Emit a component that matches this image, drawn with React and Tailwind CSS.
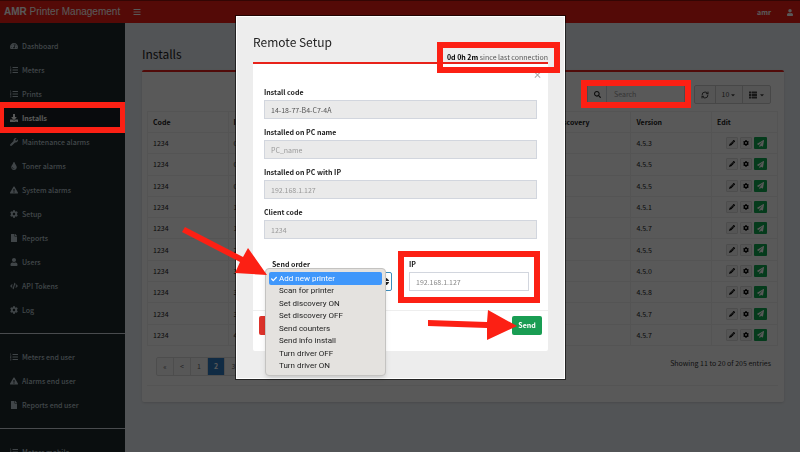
import { useState } from "react";
import {
  FaTachometerAlt,
  FaListOl,
  FaDownload,
  FaWrench,
  FaTint,
  FaExclamationTriangle,
  FaCog,
  FaFile,
  FaUser,
  FaCode,
  FaBars,
  FaSearch,
  FaThList,
  FaPencilAlt,
  FaPaperPlane,
  FaCaretDown,
  FaCheck,
  FaSort,
} from "react-icons/fa";
import { RefreshCw } from "lucide-react";

const menuGroups = [
  [
    { label: "Dashboard", icon: FaTachometerAlt },
    { label: "Meters", icon: FaListOl },
    { label: "Prints", icon: FaListOl },
    { label: "Installs", icon: FaDownload },
    { label: "Maintenance alarms", icon: FaWrench },
    { label: "Toner alarms", icon: FaTint },
    { label: "System alarms", icon: FaExclamationTriangle },
    { label: "Setup", icon: FaCog },
    { label: "Reports", icon: FaFile },
    { label: "Users", icon: FaUser },
    { label: "API Tokens", icon: FaCode },
    { label: "Log", icon: FaCog },
  ],
  [
    { label: "Meters end user", icon: FaListOl },
    { label: "Alarms end user", icon: FaExclamationTriangle },
    { label: "Reports end user", icon: FaFile },
  ],
  [{ label: "Meters mobile", icon: FaListOl }],
];

const installs = [
  { id: 1, code: "1234", install: "0", version: "4.5.3" },
  { id: 2, code: "1234", install: "0", version: "4.5.5" },
  { id: 3, code: "1234", install: "0", version: "4.5.5" },
  { id: 4, code: "1234", install: "1", version: "4.5.1" },
  { id: 5, code: "1234", install: "1", version: "4.5.7" },
  { id: 6, code: "1234", install: "2", version: "4.5.5" },
  { id: 7, code: "1234", install: "3", version: "4.5.0" },
  { id: 8, code: "1234", install: "3", version: "4.5.8" },
  { id: 9, code: "1234", install: "3", version: "4.5.7" },
  { id: 10, code: "1234", install: "4", version: "4.5.7" },
];

const orders = [
  "Add new printer",
  "Scan for printer",
  "Set discovery ON",
  "Set discovery OFF",
  "Send counters",
  "Send info install",
  "Turn driver OFF",
  "Turn driver ON",
];

function Highlight({ className }) {
  return <span className={`absolute z-30 border-[#fc2014] pointer-events-none ${className}`} />;
}

function Header() {
  return (
    <header className="flex items-center h-[23px] bg-[#f01d14] border-t border-[#8f120c] text-white shrink-0">
      <a href="#home" className="w-[125px] pl-1 text-[10px] leading-5 font-['Liberation_Sans',sans-serif] whitespace-nowrap">
        <b>AMR</b> Printer Management
      </a>
      <button aria-label="Toggle menu" className="ml-2">
        <FaBars className="w-2 h-2" />
      </button>
      <div className="ml-auto flex items-center gap-4 pr-[7px]">
        <a href="#account" className="text-[7px] font-bold leading-4">amr</a>
        <FaUser className="w-[6px] h-[7px]" />
      </div>
    </header>
  );
}

function Sidebar() {
  return (
    <nav className="w-[125px] shrink-0 bg-[#1e282c] text-[#b8c7ce] pt-[11px] overflow-hidden">
      {menuGroups.map((group, i) => (
        <ul key={i} className={i > 0 ? "mt-[11px] border-t border-[#d2d6de] pt-[11px]" : ""}>
          {group.map(({ label, icon: Icon }) => {
            const active = label === "Installs";
            return (
              <li key={label} className="relative">
                <a
                  href="#menu"
                  className={`flex items-center h-6 pl-[10px] gap-1 text-[7px] whitespace-nowrap ${active ? "bg-[#1a2226] text-white font-bold" : "font-medium"}`}
                >
                  <Icon className="w-2 h-2" />
                  {label}
                </a>
                {active && <Highlight className="inset-x-0 -top-1 -bottom-[3px] border-r-[5px] border-l-4 border-y-[6px]" />}
              </li>
            );
          })}
        </ul>
      ))}
    </nav>
  );
}

function Toolbar() {
  return (
    <div className="flex justify-end pr-[7px] pt-[13px] gap-[9px] h-[39px]">
      <div className="relative flex w-[98px] h-[19px]">
        <span className="flex items-center justify-center w-5 border border-[#d2d6de]">
          <FaSearch className="w-[7px] h-[7px]" />
        </span>
        <input
          aria-label="Search"
          placeholder="Search"
          className="flex-1 min-w-0 border border-l-0 border-[#d2d6de] px-[7px] text-[7px] placeholder:text-[#999]"
        />
        <Highlight className="-inset-x-[6px] -top-[5px] -bottom-1 border-[6px]" />
      </div>
      <div className="flex h-[19px] border border-[#ccc] rounded-[2px] bg-[#f4f4f4] text-[#444] divide-x divide-[#ccc] text-[7px]">
        <button aria-label="Refresh" className="w-[21px] flex items-center justify-center">
          <RefreshCw className="w-2 h-2" strokeWidth={3} />
        </button>
        <button className="w-[27px] flex items-center justify-center gap-px">
          10
          <FaCaretDown className="w-[6px] h-[6px]" />
        </button>
        <button aria-label="Columns" className="w-[27px] flex items-center justify-center gap-[2px]">
          <FaThList className="w-2 h-2" />
          <FaCaretDown className="w-[6px] h-[6px]" />
        </button>
      </div>
    </div>
  );
}

function InstallsTable() {
  const cell = "border border-[#f0f0f0] px-[5px] py-0 truncate";
  return (
    <table className="w-full h-[235px] table-fixed border-collapse text-left text-[7px] leading-3">
      <thead>
        <tr className="h-[21px]">
          <th className={cell}>Code</th>
          <th className={cell}>Install code</th>
          <th className={cell}>PC name</th>
          <th className={cell}>PC IP</th>
          <th className={cell}>Client</th>
          <th className={cell}>Discovery</th>
          <th className={cell}>Version</th>
          <th className={`${cell} w-[66px]`}>Edit</th>
        </tr>
      </thead>
      <tbody>
        {installs.map((row) => (
          <tr key={row.id}>
            <td className={cell}>{row.code}</td>
            <td className={cell}>{row.install}</td>
            <td className={cell}></td>
            <td className={cell}></td>
            <td className={cell}></td>
            <td className={cell}></td>
            <td className={cell}>{row.version}</td>
            <td className={cell}>
              <div className="flex justify-center gap-[2px] pl-2 pr-1">
                <button aria-label="Edit" className="w-3 h-3 flex items-center justify-center border border-[#ddd] rounded-[1px] bg-[#f4f4f4]">
                  <FaPencilAlt className="w-[6px] h-[6px] text-black" />
                </button>
                <button aria-label="Settings" className="w-3 h-3 flex items-center justify-center border border-[#ddd] rounded-[1px] bg-[#f4f4f4]">
                  <FaCog className="w-[6px] h-[6px] text-black" />
                </button>
                <button aria-label="Remote setup" className="w-[13px] h-3 flex items-center justify-center rounded-[1px] bg-[#0fa850]">
                  <FaPaperPlane className="w-[7px] h-[7px] text-white" />
                </button>
              </div>
            </td>
          </tr>
        ))}
      </tbody>
    </table>
  );
}

function Pagination() {
  return (
    <div className="flex items-start justify-between pl-[9px] pr-[7px] pt-[11px] h-10 border-b border-[#f0f0f0] text-[7px]">
      <div className="flex h-[19px] border border-[#ddd] rounded-[2px] divide-x divide-[#ddd] bg-[#fafafa] text-[#666]">
        {["«", "<", "1", "2", "3"].map((page) => (
          <button
            key={page}
            className={`w-[17px] ${page === "2" ? "bg-[#2f7cc4] text-white font-bold" : ""}`}
          >
            {page}
          </button>
        ))}
      </div>
      <p className="leading-3 text-[#333]">Showing 11 to 20 of 205 entries</p>
    </div>
  );
}

function ReadonlyField({ id, label, value, dark }) {
  return (
    <div>
      <label htmlFor={id} className="block text-[7px] leading-[9px] font-bold mb-[3px]">{label}</label>
      <input
        id={id}
        readOnly
        defaultValue={value}
        className={`block w-full h-[19px] border border-[#d2d6de] bg-[#eaeaea] px-[6px] text-[7px] ${dark ? "text-[#555]" : "text-[#999]"}`}
      />
    </div>
  );
}

function OrderSelect() {
  const [order, setOrder] = useState(orders[0]);

  return (
    <div className="relative">
      <label htmlFor="order" className="block text-[7px] leading-[9px] font-bold mb-[3px]">Send order</label>
      <div className="relative">
        <select
          id="order"
          value={order}
          onChange={(e) => setOrder(e.target.value)}
          className="block w-full h-[19px] appearance-none border border-[#3c8dbc] rounded-[2px] bg-white px-[6px] text-[7px] text-transparent"
        >
          {orders.map((o) => (
            <option key={o}>{o}</option>
          ))}
        </select>
        <FaSort className="absolute right-px top-[5px] w-[9px] h-[9px]" />
      </div>
      <ul
        role="listbox"
        aria-label="Send order"
        className="absolute z-10 -left-[7px] top-2 w-[121px] p-[3px] rounded-[4px] border border-[#c4c3c1] bg-[#e4e2df] shadow-md text-[8px] font-['Roboto',sans-serif] text-[#222]"
      >
        {orders.map((o, i) => (
          <li
            key={o}
            role="option"
            aria-selected={o === order}
            onClick={() => setOrder(o)}
            className={`flex items-center pl-[2px] rounded-[2px] whitespace-nowrap ${i % 2 ? "h-3" : "h-[13px]"} ${o === order ? "bg-[#3f97fb] text-white" : ""}`}
          >
            <span className="w-2 shrink-0">{o === order && <FaCheck className="w-[6px] h-[6px]" />}</span>
            {o}
          </li>
        ))}
      </ul>
    </div>
  );
}

function Arrows() {
  return (
    <svg
      className="absolute -left-[61px] top-[199px] w-[360px] h-[140px] z-30 pointer-events-none"
      viewBox="176 216 360 140"
      fill="#fc2014"
      aria-hidden="true"
    >
      <path d="M185 227 L243 257 L248 248 L267 275 L235 273 L240 262 L182 232 Z" />
      <path d="M428 320 L487 322 L488 310 L517 326 L487 340 L487 328 L428 326 Z" />
    </svg>
  );
}

function RemoteSetup() {
  return (
    <div
      role="dialog"
      aria-label="Remote Setup"
      className="relative w-[329px] max-w-full h-fit bg-[#ededed] border border-white ring-1 ring-black/60 px-4 pt-[15px] pb-[27px] text-[#222]"
    >
      <div className="flex items-start justify-between h-[30px]">
        <h2 className="text-[12px] leading-5">Remote Setup</h2>
        <p className="relative text-[7px] leading-[10px] mt-5 text-[#555]">
          <b className="text-black">0d 0h 2m</b> since last connection
          <Highlight className="-right-3 -left-[10px] -top-[10px] -bottom-[11px] border-[6px]" />
        </p>
      </div>
      <form className="border-t-2 border-[#e8221a] bg-white rounded-b-[2px]" onSubmit={(e) => e.preventDefault()}>
        <div className="flex justify-end h-6 pt-[6px] pr-[6px]">
          <button type="button" aria-label="Close" className="h-[10px] text-[9px] leading-[10px] text-[#aaa] font-bold">×</button>
        </div>
        <div className="flex flex-col gap-[9px] px-[11px]">
          <ReadonlyField id="install-code" label="Install code" value="14-18-77-B4-C7-4A" dark />
          <ReadonlyField id="pc-name" label="Installed on PC name" value="PC_name" />
          <ReadonlyField id="pc-ip" label="Installed on PC with IP" value="192.168.1.127" />
          <ReadonlyField id="client-code" label="Client code" value="1234" />
        </div>
        <div className="grid grid-cols-2 gap-[17px] px-[19px] pt-[21px] pb-[19px]">
          <OrderSelect />
          <div className="relative">
            <label htmlFor="ip" className="block text-[7px] leading-[9px] font-bold mb-[3px]">IP</label>
            <input
              id="ip"
              placeholder="192.168.1.127"
              className="block w-full h-[19px] border border-[#d2d6de] px-[6px] text-[7px] placeholder:text-[#888]"
            />
            <Highlight className="-inset-x-[11px] -top-[9px] -bottom-3 border-[6px]" />
          </div>
        </div>
        <div className="flex justify-between border-t border-[#eee] px-[6px] pt-[5px] pb-4 text-[7px] font-bold text-white">
          <button type="button" aria-label="Cancel" className="w-[34px] h-[19px] rounded-[2px] bg-[#dd332b]" />
          <button type="submit" className="w-[30px] h-[19px] rounded-[2px] bg-[#199d53]">Send</button>
        </div>
      </form>
      <Arrows />
    </div>
  );
}

export default function App() {
  return (
    <div className="h-screen flex flex-col overflow-hidden bg-[#ecf0f5] text-[#222] font-['Noto_Sans_CJK_SC',sans-serif]">
      <Header />
      <div className="flex flex-1 min-h-0">
        <Sidebar />
        <main className="flex-1 min-w-0 pl-[17px] pr-4 pt-[21px]">
          <h1 className="text-[12px] leading-5 mb-[6px]">Installs</h1>
          <section className="border-t-2 border-[#e8221a] bg-white rounded-[2px] pl-[5px] pr-[6px] pb-4 shadow-sm">
            <Toolbar />
            <InstallsTable />
            <Pagination />
          </section>
        </main>
      </div>
      <div className="fixed inset-0 z-10 bg-black/65" />
      <div className="fixed inset-0 z-20 flex justify-center items-start pt-4 pl-px">
        <RemoteSetup />
      </div>
    </div>
  );
}
